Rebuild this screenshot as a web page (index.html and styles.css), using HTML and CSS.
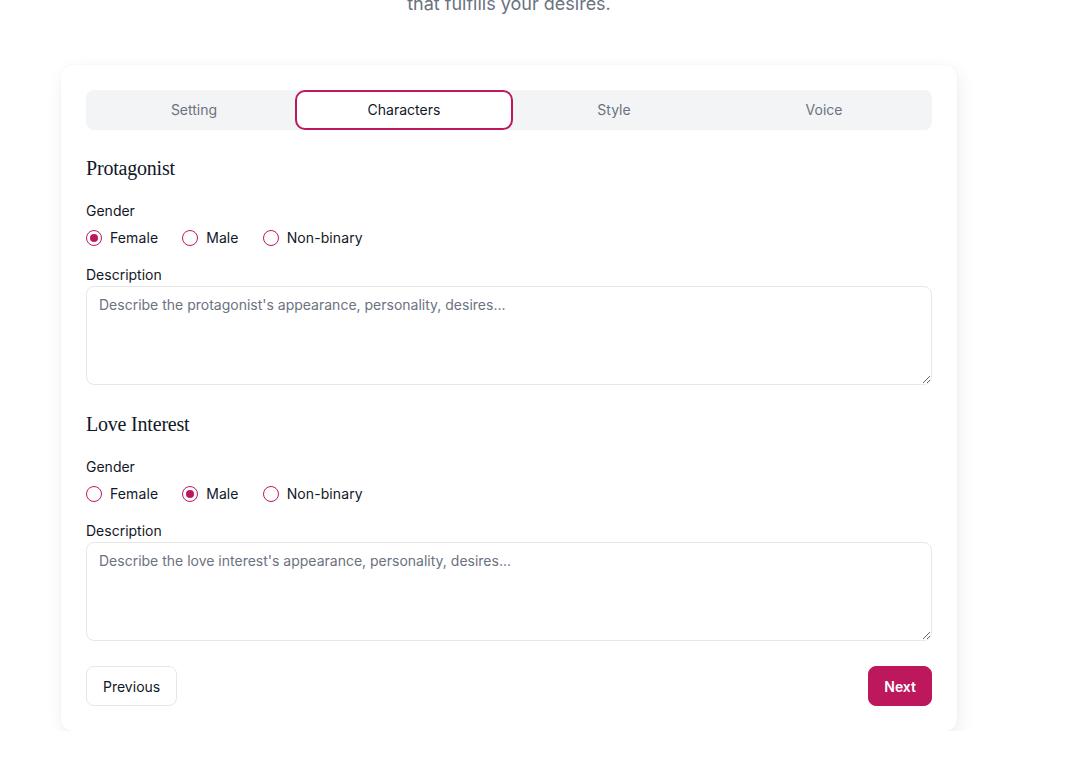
FILE: index.html
```html
<!DOCTYPE html>
<html lang="en">
<head>
<meta charset="utf-8">
<title>Characters</title>
<link rel="stylesheet" href="styles.css">
</head>
<body>
<main class="page">
  <p class="intro">that fulfills your desires.</p>
  <section class="card">
    <nav class="tabs">
      <button class="tab">Setting</button>
      <button class="tab active">Characters</button>
      <button class="tab">Style</button>
      <button class="tab">Voice</button>
    </nav>

    <div class="section first">
      <h2 class="heading">Protagonist</h2>
      <div class="label">Gender</div>
      <div class="radios">
        <label class="radio"><span class="dot checked"></span>Female</label>
        <label class="radio"><span class="dot"></span>Male</label>
        <label class="radio"><span class="dot"></span>Non-binary</label>
      </div>
      <div class="label desc">Description</div>
      <textarea class="textarea" placeholder="Describe the protagonist's appearance, personality, desires..."></textarea>
    </div>

    <div class="section">
      <h2 class="heading">Love Interest</h2>
      <div class="label">Gender</div>
      <div class="radios">
        <label class="radio"><span class="dot"></span>Female</label>
        <label class="radio"><span class="dot checked"></span>Male</label>
        <label class="radio"><span class="dot"></span>Non-binary</label>
      </div>
      <div class="label desc">Description</div>
      <textarea class="textarea" placeholder="Describe the love interest's appearance, personality, desires..."></textarea>
    </div>

    <div class="actions">
      <button class="btn btn-outline">Previous</button>
      <button class="btn btn-primary">Next</button>
    </div>
  </section>
</main>
</body>
</html>
```
FILE: styles.css
```css
* { box-sizing: border-box; }
html, body { margin: 0; padding: 0; background: #ffffff; }
body {
  font-family: Inter, "Noto Sans", sans-serif;
  color: #111827;
  overflow: hidden;
}
.page {
  width: 896px;
  margin-left: 61px;
}
.intro {
  margin: -10px 0 0 0;
  text-align: center;
  font-size: 18px;
  line-height: 28px;
  color: #6b7280;
}
.card {
  margin-top: 47px;
  background: #fff;
  border-radius: 12px;
  padding: 25px;
  box-shadow: 2px 6px 18px rgba(0,0,0,0.07), 0 0 3px rgba(0,0,0,0.04);
}
.tabs {
  display: grid;
  grid-template-columns: repeat(4, 1fr);
  height: 40px;
  padding: 4px 3px;
  background: #f3f4f6;
  border-radius: 8px;
}
.tab {
  border: 0;
  background: transparent;
  font-family: inherit;
  font-size: 14px;
  font-weight: 400;
  color: #6b7280;
  border-radius: 6px;
  padding: 0 0 2px;
  cursor: pointer;
}
.tab.active {
  background: #fff;
  color: #111827;
  box-shadow: 0 0 0 2px #fff, 0 0 0 4px #be185d;
}
.section.first { margin-top: 24px; }
.section { margin-top: 25px; }
.heading {
  margin: 0;
  font-family: "Liberation Serif", "DejaVu Serif", serif;
  font-weight: 400;
  font-size: 20px;
  line-height: 28px;
  color: #111827;
  letter-spacing: -0.2px;
}
.label {
  margin-top: 19px;
  font-size: 14px;
  line-height: 20px;
  font-weight: 400;
  color: #111827;
}
.label.desc { margin-top: 17px; }
.radios {
  display: flex;
  gap: 24px;
  margin-top: 7px;
  height: 20px;
  align-items: center;
}
.radio {
  display: flex;
  align-items: center;
  gap: 8px;
  font-size: 14px;
  line-height: 20px;
  color: #111827;
  letter-spacing: 0.1px;
}
.dot {
  width: 16px;
  height: 16px;
  border: 1px solid #be185d;
  border-radius: 50%;
  display: inline-flex;
  align-items: center;
  justify-content: center;
}
.dot.checked::after {
  content: "";
  width: 8px;
  height: 8px;
  border-radius: 50%;
  background: #be185d;
}
.textarea {
  display: block;
  width: 100%;
  height: 99px;
  margin-top: 1px;
  border: 1px solid #e5e7eb;
  border-radius: 8px;
  padding: 8px 12px;
  font-family: inherit;
  font-size: 14px;
  line-height: 20px;
  color: #111827;
  resize: vertical;
  background: #fff;
}
.textarea::placeholder { color: #6b7280; }
.actions {
  display: flex;
  justify-content: space-between;
  margin-top: 25px;
}
.btn {
  height: 40px;
  padding: 0 16px;
  border-radius: 8px;
  font-family: inherit;
  font-size: 14px;
  font-weight: 400;
  cursor: pointer;
}
.btn-outline {
  background: #fff;
  border: 1px solid #e5e7eb;
  color: #111827;
}
.btn-primary {
  padding: 0 15px;
  background: #be185d;
  border: 1px solid #be185d;
  color: #fff;
  font-weight: 600;
}
```
